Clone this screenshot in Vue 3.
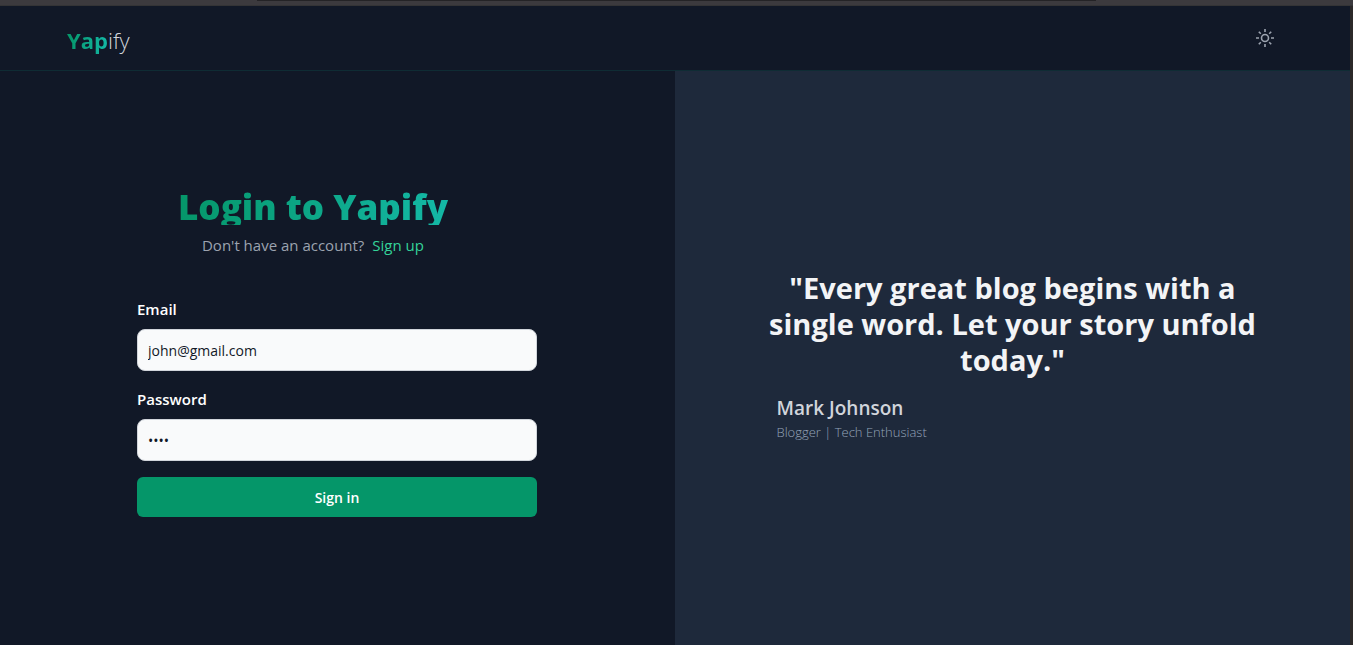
<script setup>
import { ref } from 'vue'

const email = ref('john@gmail.com')
const password = ref('john')
</script>

<template>
  <div class="frame">
    <div class="top-strip"><span></span></div>
    <div class="page">
      <header class="navbar">
        <a class="brand" href="#"><span class="brand-bold">Yap</span><span class="brand-thin">ify</span></a>
        <button class="theme" type="button" aria-label="Toggle theme">
          <svg viewBox="0 0 20 20" width="20" height="20" fill="none" stroke="currentColor" stroke-width="1.6">
            <circle cx="10" cy="10" r="3.5" />
            <path d="M10 1v3M10 16v3M1 10h3M16 10h3M3.8 3.8l2 2M14.2 14.2l2 2M3.8 16.2l2-2M14.2 5.8l2-2" />
          </svg>
        </button>
      </header>
      <main class="columns">
        <section class="login">
          <div class="login-box">
            <div class="intro">
              <h1>Login to Yapify</h1>
              <p>Don't have an account?<a href="#">Sign up</a></p>
            </div>
            <form @submit.prevent>
              <label for="email">Email</label>
              <input id="email" v-model="email" type="email" />
              <label for="password">Password</label>
              <input id="password" v-model="password" type="password" />
              <button type="submit">Sign in</button>
            </form>
          </div>
        </section>
        <section class="testimonial">
          <figure>
            <blockquote>"Every great blog begins with a single word. Let your story unfold today."</blockquote>
            <figcaption>
              <strong>Mark Johnson</strong>
              <span>Blogger | Tech Enthusiast</span>
            </figcaption>
          </figure>
        </section>
      </main>
    </div>
  </div>
</template>

<style>
body {
  margin: 0;
  background: #2b2929;
}
</style>

<style scoped>
* {
  box-sizing: border-box;
  margin: 0;
}

.frame {
  display: flex;
  flex-direction: column;
  min-height: 100vh;
  padding-right: 3px;
  font-family: "Open Sans", "Noto Sans", sans-serif;
  font-size: 15px;
  line-height: 24px;
  color: #fff;
}

.top-strip {
  height: 6px;
  margin-right: -3px;
  background: #3c3a3e;
  border-bottom: 1px solid #343436;
}

.top-strip span {
  display: block;
  height: 1px;
  margin: 0 19%;
  background: #242326;
}

.page {
  flex: 1;
  display: flex;
  flex-direction: column;
  background: #111827;
}

.navbar {
  display: flex;
  align-items: center;
  justify-content: space-between;
  height: 65px;
  padding: 0 75px 0 67px;
  border-bottom: 1px solid #0f2c34;
}

.brand {
  font-size: 22px;
  line-height: 32px;
  text-decoration: none;
  padding-top: 4px;
}

.brand-bold {
  font-weight: 700;
  color: transparent;
  background: linear-gradient(to right, #059669, #14b8a6);
  background-clip: text;
}

.brand-thin {
  font-weight: 300;
  color: #d1d5db;
}

.theme {
  display: flex;
  padding: 0;
  border: 0;
  background: none;
  color: #9ca3af;
}

.columns {
  flex: 1;
  display: grid;
  grid-template-columns: 1fr 1fr;
}

.login,
.testimonial {
  display: flex;
  align-items: center;
  justify-content: center;
}

.login {
  padding: 0 1px 10px 0;
}

.testimonial {
  padding-bottom: 4px;
  background: #1e293b;
}

.login-box {
  width: 400px;
}

.intro {
  margin-bottom: 40px;
  padding-right: 48px;
  text-align: center;
}

h1 {
  display: inline-block;
  font-size: 35px;
  line-height: 36px;
  font-weight: 800;
  color: transparent;
  background: linear-gradient(to right, #059669, #14b8a6);
  background-clip: text;
  vertical-align: top;
}

.intro p {
  margin-top: 8px;
  color: #9ca3af;
}

.intro a {
  margin-left: 8px;
  color: #34d399;
  text-decoration: none;
}

form {
  display: flex;
  flex-direction: column;
}

label {
  margin-bottom: 8px;
  font-weight: 600;
}

input {
  height: 42px;
  margin-bottom: 16px;
  padding: 0 10px;
  border: 1px solid #d1d5db;
  border-radius: 8px;
  background: #f9fafb;
  color: #111827;
  font-family: inherit;
  font-size: 14px;
}

form button {
  height: 40px;
  border: 0;
  border-radius: 6px;
  background: #059669;
  color: #fff;
  font-family: inherit;
  font-size: 14px;
  font-weight: 600;
}

figure {
  width: 488px;
}

blockquote {
  font-size: 29px;
  line-height: 36px;
  font-weight: 700;
  text-align: center;
  color: #f3f4f6;
}

figcaption {
  display: flex;
  flex-direction: column;
  margin-top: 16px;
  padding-left: 8px;
}

figcaption strong {
  font-size: 19px;
  line-height: 28px;
  font-weight: 600;
  color: #d1d5db;
}

figcaption span {
  font-size: 13px;
  line-height: 20px;
  font-weight: 300;
  color: #94a3b8;
}
</style>
